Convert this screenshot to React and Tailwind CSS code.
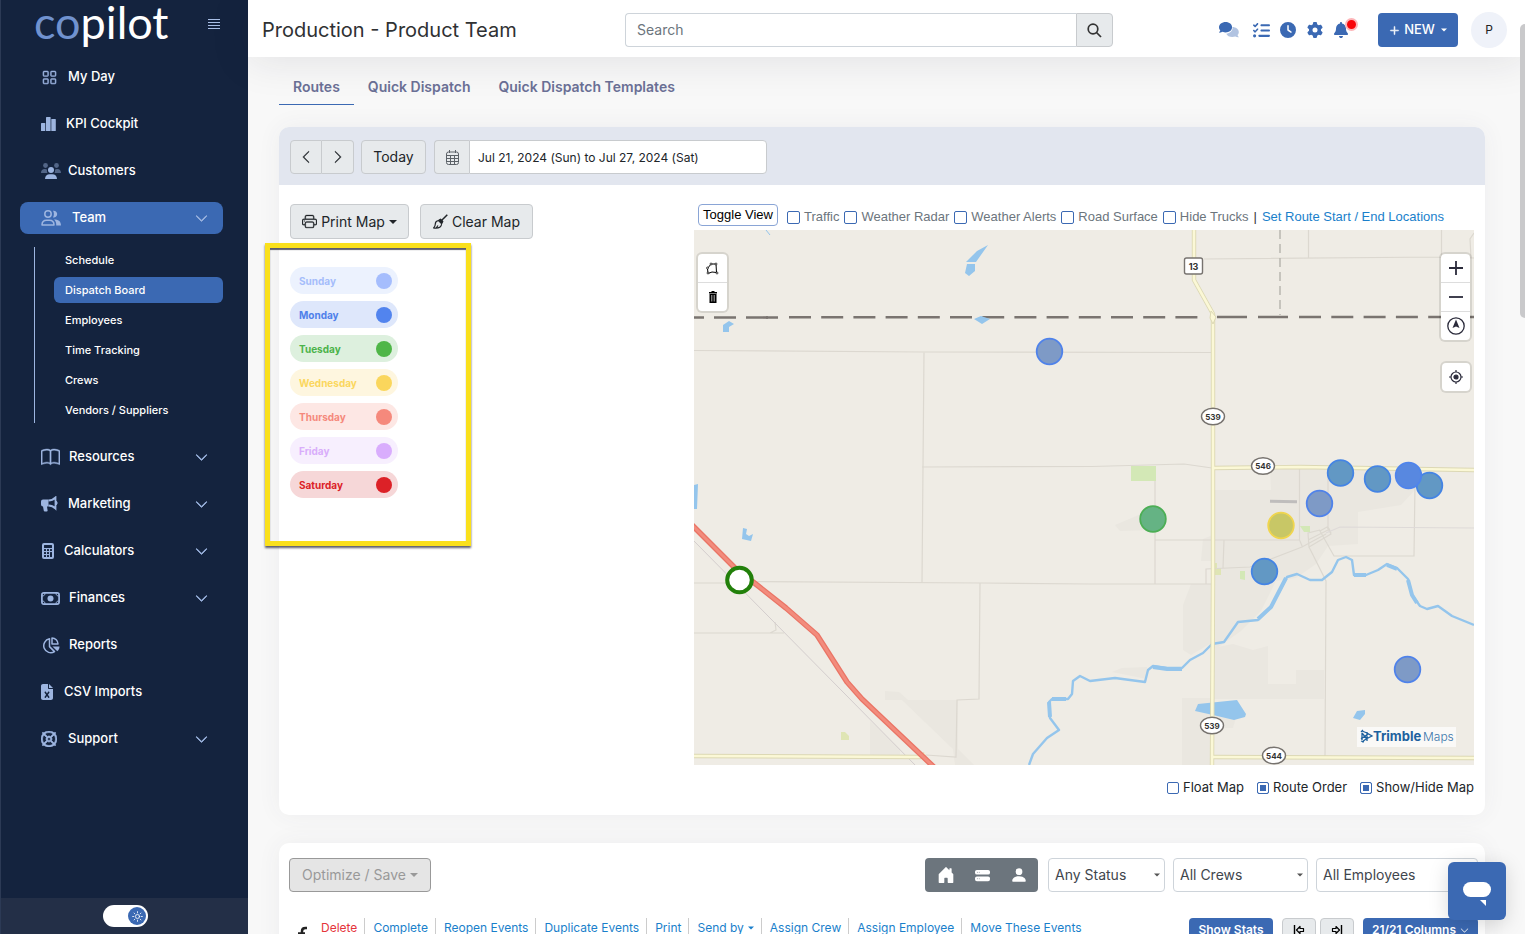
import React, { useState } from 'react';
import {
  BsGrid, BsBook, BsCalculatorFill, BsChevronDown, BsChevronLeft, BsChevronRight,
  BsPrinter, BsHouseDoorFill, BsHddStackFill, BsPersonFill, BsPlusLg,
} from 'react-icons/bs';
import { FaListCheck, FaClock, FaGear, FaBell, FaFileExcel, FaRegLifeRing } from 'react-icons/fa6';
import { HiOutlineSun } from 'react-icons/hi2';

const KpiIcon = () => (
  <svg width="15" height="14" viewBox="0 0 15 14" fill="currentColor">
    <rect x="0" y="6" width="4.300" height="8" rx="0.6" />
    <rect x="5" y="0" width="4.600" height="14" rx="0.6" />
    <rect x="10.300" y="2" width="4.500" height="12" rx="0.6" />
  </svg>
);

const CustomersIcon = () => (
  <svg width="20" height="16" viewBox="0 0 20 16" fill="currentColor">
    <g opacity="0.45">
      <circle cx="4.5" cy="2.5" r="2.4" />
      <circle cx="15.5" cy="2.5" r="2.4" />
      <path d="M0 10c0-2.6 1.400-4 3.800-4 1 0 1.700.2 2.300.7C5.700 8 5.900 9 6.600 10z" />
      <path d="M20 10c0-2.600-1.400-4-3.800-4-1 0-1.700.2-2.300.7.4 1.300.2 2.300-.5 3.300z" />
    </g>
    <circle cx="10" cy="7" r="3" />
    <path d="M4 16c0-3.200 2-4.800 4.600-4.800h2.800C14 11.200 16 12.800 16 16z" />
  </svg>
);

const TeamIcon = () => (
  <svg width="20" height="16" viewBox="0 0 20 16" fill="none" stroke="currentColor" strokeWidth="1.500">
    <circle cx="7" cy="4" r="3.200" />
    <path d="M1 15c0-3 2-4.800 4.600-4.800h2.800C11 10.200 13 12 13 15z" strokeLinejoin="round" />
    <path d="M12 .8a3.400 3.400 0 1 1 0 6.600c1.200-2 1.200-4.600 0-6.600zM13 9.500c4 0 7 1.500 7 6h-4.800c.2-2.600-.5-4.600-2.200-6z" fill="currentColor" stroke="none" />
  </svg>
);

const BullhornIcon = () => (
  <svg width="17" height="16" viewBox="0 0 17 16" fill="currentColor">
    <path d="M2 3.600h5.500v6.800H6l.6 4.200c.1.600-.3 1-.9 1H3.800c-.5 0-.9-.3-1-.8L2 10.400a2 2 0 0 1-2-2V5.600a2 2 0 0 1 2-2z" />
    <path d="M7.500 4.500c2.800 0 5-1 7-3v11c-2-2-4.200-3-7-3" fill="none" stroke="currentColor" strokeWidth="1.800" />
    <path d="M15.300 5.200c1 .5 1 3.100 0 3.600z" stroke="currentColor" />
  </svg>
);

const MoneyIcon = () => (
  <svg width="19" height="13" viewBox="0 0 19 13" fill="none" stroke="currentColor" strokeWidth="1.700">
    <rect x="0.900" y="0.900" width="17.200" height="11.200" rx="2" />
    <circle cx="9.500" cy="6.500" r="3" fill="currentColor" stroke="none" />
    <path d="M1 4c2 0 3-1 3-3M18 4c-2 0-3-1-3-3M1 9c2 0 3 1 3 3M18 9c-2 0-3 1-3 3" strokeWidth="1" />
  </svg>
);

const ReportsIcon = () => (
  <svg width="18" height="17" viewBox="0 0 18 17" fill="none" stroke="currentColor" strokeWidth="1.500">
    <path d="M7.500 1.800A7 7 0 1 0 12.500 14.600L7.500 9.600z" strokeLinejoin="round" />
    <path d="M10 1v6h6a6 6 0 0 0-6-6z" strokeLinejoin="round" />
    <path d="M10.500 9.400h7c0 2-.8 3.600-2.200 4.800z" fill="currentColor" stroke="none" />
  </svg>
);

const CommentsIcon = () => (
  <svg width="20" height="16" viewBox="0 0 20 16" fill="currentColor">
    <path opacity="0.4" d="M13.200 5c3.800 0 6.600 2.200 6.600 5 0 1.200-.5 2.300-1.300 3.100.3 1 .9 1.700 1.400 2.200-1.300.2-2.600-.2-3.600-.8-.9.300-1.900.5-2.900.5-3 0-5.300-1.300-6.100-3.300 3.500-.400 6.200-2.800 6.400-6z" />
    <path d="M6.600 0C2.900 0 0 2.300 0 5.200c0 1.200.5 2.300 1.300 3.100C1 9.400.5 10 0 10.600c1.300.2 2.600-.2 3.700-.8.9.4 1.900.6 2.900.6 3.700 0 6.500-2.300 6.500-5.200S10.300 0 6.600 0z" />
  </svg>
);

const BrushIcon = () => (
  <svg width="15" height="15" viewBox="0 0 15 15" fill="none" stroke="currentColor" strokeWidth="1.200" strokeLinejoin="round">
    <path d="M14.300.8L8.500 6.500" strokeWidth="1.500" />
    <path d="M5 6.200l4 4M5.500 6.500c-2 .3-3.200 1.500-3.200 3.500 0 1.800-.6 3-1.700 4 3 .4 7.200.2 8-3.600M3.500 13.500l1.500-2" />
    <path d="M6.200 6l1.300-.8 2.300 2.300L9 9z" fill="currentColor" />
  </svg>
);

const CalendarIcon = () => (
  <svg width="13" height="15" viewBox="0 0 13 15" fill="none" stroke="currentColor">
    <rect x="0.500" y="2" width="12" height="12.500" rx="2" />
    <path d="M.5 5.500h12M.5 8.500h12M.5 11.500h12M4.500 5.500v9M8.500 5.500v9M3.500 0v3M9.500 0v3" />
  </svg>
);

const ArrowLineIcon = ({ flip }) => (
  <svg width="12" height="10" viewBox="0 0 12 10" fill="none" stroke="currentColor" className={flip ? 'rotate-180' : ''}>
    <path d="M1.500 0v10" strokeWidth="1.400" />
    <path d="M3.500 5L7 1.500v2h3.500v3H7v2z" strokeWidth="1.200" strokeLinejoin="round" />
  </svg>
);

const Caret = ({ className = '' }) => (
  <svg width="8" height="4" viewBox="0 0 8 4" fill="currentColor" className={className}>
    <path d="M0 0h8L4 4z" />
  </svg>
);

const teamLinks = ['Schedule', 'Dispatch Board', 'Employees', 'Time Tracking', 'Crews', 'Vendors / Suppliers'];

const navItems = [
  { name: 'My Day', icon: <BsGrid size={15} strokeWidth={0.500} />, gap: 'gap-[11px] pl-[22px]' },
  { name: 'KPI Cockpit', icon: <KpiIcon />, gap: 'gap-[10px] pl-[21px]' },
  { name: 'Customers', icon: <CustomersIcon />, gap: 'gap-[7px] pl-[21px]' },
  { name: 'Team', icon: <TeamIcon />, gap: 'gap-[11px] pl-[21px]', open: true, more: true },
  { name: 'Resources', icon: <BsBook size={19} strokeWidth={0.400} />, gap: 'gap-[9px] pl-[21px]', more: true },
  { name: 'Marketing', icon: <BullhornIcon />, gap: 'gap-[10px] pl-[21px]', more: true },
  { name: 'Calculators', icon: <BsCalculatorFill size={16} />, gap: 'gap-2 pl-5', more: true },
  { name: 'Finances', icon: <MoneyIcon />, gap: 'gap-[9px] pl-[21px]', more: true },
  { name: 'Reports', icon: <ReportsIcon />, gap: 'gap-[9px] pl-[22px]' },
  { name: 'CSV Imports', icon: <FaFileExcel size={16} />, gap: 'gap-[9px] pl-[19px]' },
  { name: 'Support', icon: <FaRegLifeRing size={16} strokeWidth={20} />, gap: 'gap-[11px] pl-[21px]', more: true },
];

const days = [
  { name: 'Sunday', pill: 'bg-[#ecf2fe] text-[#a5bdfb]', dot: 'bg-[#a5bdfd]' },
  { name: 'Monday', pill: 'bg-[#dee7fb] text-[#4f80ea]', dot: 'bg-[#5284ee]' },
  { name: 'Tuesday', pill: 'bg-[#ddf0de] text-[#4bb34a]', dot: 'bg-[#4fb648]' },
  { name: 'Wednesday', pill: 'bg-[#fef6df] text-[#fbd75e]', dot: 'bg-[#fad65c]' },
  { name: 'Thursday', pill: 'bg-[#fde7e4] text-[#f5897c]', dot: 'bg-[#f5897c]' },
  { name: 'Friday', pill: 'bg-[#f7effe] text-[#d9adfb]', dot: 'bg-[#d9adfd]' },
  { name: 'Saturday', pill: 'bg-[#f6d7d8] text-[#dc2127]', dot: 'bg-[#dc2127]' },
];

const stops = [
  { x: 1049.5, y: 351.500, fill: '#7e9ac6', stroke: '#4f82ea' },
  { x: 1429.5, y: 485.500, fill: '#6298c4', stroke: '#4484e4' },
  { x: 1340.5, y: 473, fill: '#6298c4', stroke: '#4484e4' },
  { x: 1377.5, y: 479, fill: '#6298c4', stroke: '#4484e4' },
  { x: 1408.5, y: 475.500, fill: '#5888e0', stroke: '#4f84ec' },
  { x: 1319.5, y: 503.500, fill: '#7e9ac6', stroke: '#4f82ea' },
  { x: 1281, y: 525.500, fill: '#c8c766', stroke: '#f0d54e' },
  { x: 1153, y: 519, fill: '#65b384', stroke: '#4cae55' },
  { x: 1264.5, y: 571.500, fill: '#6298c4', stroke: '#4484e4' },
  { x: 1407.5, y: 669.500, fill: '#7e9ac6', stroke: '#4f82ea' },
];

const shields = [
  { x: 1213, y: 416.500, label: '539' },
  { x: 1263, y: 466, label: '546' },
  { x: 1212, y: 725.500, label: '539' },
  { x: 1274, y: 755.500, label: '544' },
];

const yellowRoads = [
  'M694 756l226 1 5-3',
  'M1213 468l87-1 174 3',
  'M1212 757l262 1',
  'M1194 230v50l19 34v266l-1 185',
];

const highway = 'M690 523l45 45 22 17 29 23 31 27 30 47 15 17 74 70';

const MapCanvas = () => (
  <svg viewBox="694 230 780 535" preserveAspectRatio="xMidYMid slice" className="block h-full w-full">
    <rect x="694" y="230" width="780" height="535" fill="#efece5" />
    <g fill="#eae7e0">
      <path d="M870 721l30 28v6h-30zM885 691l14 1 9 8h50v49l16 16h-19l-2-16-51-49h-17z" />
      <path d="M1270 468h145v22l-14 15-43 7v32l-30 2-12 18-20 14-20 3-15 30-20 20-28 20v-90h-12l2-22 10-4v-45h58z" />
      <path d="M1213 584v58l-22 13-8-5v-45l8-21zM1213 648l20-4 20 6 15-4v38h28v-14h28v29h-112zM1182 698h31v16h24l-4 14h-20v37h-31z" />
      <path d="M1115 525l40-17v22l-35 1zM1112 672l10-4 25-1v12z" />
    </g>
    <g fill="#d3e8b6">
      <path d="M1131 466h25v15h-25zM1240 571h5v9l-5-1zM1300 526h10v6h-6z" />
      <path d="M1214 563h3v5h4v7h-7zM841 732h4l4 4v4h-8z" fill="#dfe5b4" />
    </g>
    <g fill="none" stroke="#dcd8d0" strokeWidth="1.200">
      <path d="M694 350.500l229 1.500 289 .5M924 352l-2 231M922 467l170-.5 92-2.500 28 4" />
      <path d="M694 583h40M752 581.500l230 1.500 108 1h122M980 583l-1 116-22 1-1 57-30-2" />
      <path d="M694 633h90M775 622l1 8-6 3M1155 481v103M1155 540h144M1224 540l-1 28M1206 584v-15l44-2 52-20 24-13" />
      <path d="M1204 259l237-2 33 1M1308.500 230v28M1441.500 230v27M1474 233l-4 6 1 19" />
      <path d="M1299.500 468v72l3 7M1328 470v57l3 6M1415 484l-1 72h-80l-14-25 7-4 4 7-22 13-1-14 12-3M1309 547l17 34-1 176M1308 540l22-11" />
      <path d="M1326 533l14-6 134 1" stroke="#dedad8" />
    </g>
    <path d="M694 541l224 227" stroke="#d3cdcd" fill="none" />
    <path d="M1280 230v85" stroke="#b9b6b0" strokeWidth="1.500" strokeDasharray="9 5" fill="none" />
    <rect x="1270" y="500" width="27" height="3" fill="#bfbdbc" transform="rotate(1 1283 501)" />
    <g stroke="#7a7470" strokeWidth="2.600" fill="none">
      <path d="M682 317.500h96" strokeDasharray="22 10" />
      <path d="M766 317.500h12M1217 317h30M1258 317h30" />
      <path d="M789 317.300h410" strokeDasharray="22 10.200" />
      <path d="M1299 317h175" strokeDasharray="22 10.300" />
    </g>
    <g fill="#94c5ec">
      <path d="M966 262l11-11 11-6-12 17zM967 264h8v7l-6 5-4-3zM723 325l6-4 5 3-5 3v5h-6zM974 319l7-3 9 3-8 5zM694 485l4-1-1 25h-3z" />
      <path d="M743 528l4 1-1 5 3 2 4-2-2 7-9-2zM1195 711l3-7 39-4 9 14-1 3-11 3-21-5zM1353 718l4-7 8-1v4l-5 6z" />
    </g>
    <g fill="none" stroke="#94c5ec" strokeLinejoin="round">
      <path d="M766 230l4 5" />
      <path
        strokeWidth="2.400"
        d="M1029 765l4-11 14-16 12-8-9-12-1-16 3-3h16l4-5 1-13 7-5 10 5 25-3 30 4 3-12 5-4 14 2h15l8-8 13-7 9-9 12-2 14-20 20-2 13-13 16-30 10-3 13 6h12l10-8 6-12 8-3 6 3 2 15h12l12-5 9-6 10 4 11 11 4 16 8 11 7 3 11-3 14 10 22 9"
      />
      <path strokeWidth="4" d="M1153 667l14 2h15M1258 619l13-12 15-29M1408 580l4 15 5 8M1052 699h14M1387 565l10 4M1354 575h12M1049 702l1 15" />
    </g>
    <g fill="none" strokeLinejoin="round">
      {yellowRoads.map((d) => (
        <path key={d} d={d} stroke="#dcd8b4" strokeWidth="4.400" />
      ))}
      {yellowRoads.map((d) => (
        <path key={d} d={d} stroke="#fbf8d6" strokeWidth="2.600" />
      ))}
      <path d="M1211 311l5 6-3 7-3-6z" fill="#fbf8d6" stroke="#dcd8b4" />
      <path d={highway} stroke="#ea7465" strokeWidth="5.500" />
      <path d={highway} stroke="#f28c7d" strokeWidth="3" />
    </g>
    <rect x="1184.500" y="258" width="18" height="16" rx="2" fill="#fff" stroke="#77736f" strokeWidth="1.400" />
    <text x="1193.500" y="269.500" textAnchor="middle" className="fill-[#333] text-[9px] font-bold">13</text>
    {shields.map((s) => (
      <g key={`${s.x}-${s.y}`}>
        <ellipse cx={s.x} cy={s.y} rx="11.500" ry="8.300" fill="#fff" stroke="#77736f" strokeWidth="1.400" />
        <text x={s.x} y={s.y + 3} textAnchor="middle" className="fill-[#333] text-[8px] font-bold">{s.label}</text>
      </g>
    ))}
    <circle cx="739.500" cy="580" r="12.300" fill="#fff" stroke="#22800a" strokeWidth="4" />
    {stops.map((s) => (
      <circle key={`${s.x}-${s.y}`} cx={s.x} cy={s.y} r="12.800" fill={s.fill} stroke={s.stroke} strokeWidth="1.800" />
    ))}
    <rect x="1357" y="727" width="99" height="20" fill="#fff" fillOpacity="0.7" />
    <g fill="none" stroke="#1d619e" strokeWidth="1.300">
      <path d="M1362 731l5 2 5 3-6 3-4 3M1362 733v7M1367 732v9M1362 733l5 6M1361 739l7-5M1363 730l-2 2M1361 741l3 1" />
    </g>
    <text x="1373" y="741" className="fill-[#1d619e] text-[13px] font-bold">Trimble</text>
    <text x="1423" y="741" className="fill-[#3b76ab] text-[12px] font-light">Maps</text>
  </svg>
);

const Check = ({ label, checked = false, font, size }) => (
  <label className={`flex items-center gap-1 whitespace-nowrap ${font}`}>
    <input
      type="checkbox"
      defaultChecked={checked}
      className={`appearance-none rounded-[2px] border border-[#3b69b3] bg-white checked:bg-[#3b69b3] checked:shadow-[inset_0_0_0_2px_white] ${size}`}
    />
    {label}
  </label>
);

const Sidebar = () => (
  <aside className="flex w-[248px] shrink-0 flex-col border-l border-[#2c3a55] bg-[#14233e] text-white">
    <div className="flex h-[61px] items-start justify-between pl-[33px] pr-7">
      <a href="#home" className="font-['Lato',sans-serif] text-[45px] leading-[44px]">
        <span className="text-[#7092cf]">co</span>pilot
      </a>
      <button aria-label="Collapse menu" className="mt-[19px] text-[#a9bfe6]">
        <svg width="12" height="11" viewBox="0 0 12 11" stroke="currentColor">
          <path d="M0 .5h12M0 3.500h12M0 6.500h12M0 9.500h12" />
        </svg>
      </button>
    </div>
    <nav className="flex flex-1 flex-col gap-[15px] pl-[19px] pr-[25px]">
      {navItems.map((item) => (
        <div key={item.name}>
          <a
            href="#nav"
            className={`flex h-8 items-center rounded-lg pr-[15px] text-[13px] font-medium ${item.gap} ${item.open ? 'bg-[#3b69b3]' : ''}`}
          >
            <span className="text-[#9db5e0]">{item.icon}</span>
            {item.name}
            {item.more && <BsChevronDown size={13} strokeWidth={1} className="ml-auto text-[#9db5e0]" />}
          </a>
          {item.open && (
            <div className="mb-[3px] ml-[14px] mt-[13px] border-l border-[#9db5e0] pl-[19px]">
              <div className="flex flex-col gap-1">
                {teamLinks.map((link) => (
                  <a
                    key={link}
                    href="#team"
                    className={`flex h-[26px] items-center rounded-md pl-[11px] text-[11px] font-medium ${
                      link === 'Dispatch Board' ? 'bg-[#3b69b3]' : ''
                    }`}
                  >
                    {link}
                  </a>
                ))}
              </div>
            </div>
          )}
        </div>
      ))}
    </nav>
    <div className="flex h-9 items-center justify-center bg-[#232f47] pl-[2px]">
      <label className="relative block h-[22px] w-[45px] rounded-full bg-white">
        <input type="checkbox" defaultChecked aria-label="Light theme" className="absolute inset-0 appearance-none" />
        <span className="absolute right-[2px] top-[2px] flex size-[18px] items-center justify-center rounded-full bg-[#3b69b3]">
          <HiOutlineSun size={13} />
        </span>
      </label>
    </div>
  </aside>
);

const TopBar = () => (
  <header className="relative z-10 flex h-[57px] shrink-0 items-center bg-white pb-px pl-[14px] pr-[18px] pt-1 shadow-[0_4px_40px_rgba(30,30,50,0.1)]">
    <h1 className="w-[363px] text-xl text-[#2f3133]">Production - Product Team</h1>
    <form className="flex h-[34px] w-[488px]">
      <input
        type="text"
        aria-label="Search"
        placeholder="Search"
        className="min-w-0 flex-1 rounded-l border border-r-0 border-[#ced4da] px-[11px] text-sm placeholder:text-[#6c757d]"
      />
      <button type="button" aria-label="Search" className="flex w-[37px] items-center justify-center rounded-r border border-[#c8cbce] bg-[#e7eaec] pr-px text-[#333]">
        <svg width="15" height="15" viewBox="0 0 15 15" fill="none" stroke="currentColor" strokeWidth="1.700">
          <circle cx="6" cy="6" r="4.800" />
          <path d="M9.500 9.500l4.500 4.500" />
        </svg>
      </button>
    </form>
    <div className="ml-auto flex items-center text-[#3b69b3]">
      <button aria-label="Messages" className="mr-[14px]"><CommentsIcon /></button>
      <button aria-label="Tasks" className="mr-[10px]"><FaListCheck size={17} /></button>
      <button aria-label="Timers" className="mr-[11px]"><FaClock size={16} /></button>
      <button aria-label="Settings" className="mr-[10px]"><FaGear size={16} /></button>
      <button aria-label="Notifications" className="relative mr-[29px]">
        <FaBell size={16} />
        <span className="absolute -right-[9px] -top-[4px] size-[13px] rounded-full border-2 border-[#fdb5b8] bg-[#f80509]" />
      </button>
      <button className="flex h-[34px] w-20 items-center justify-center gap-1 rounded bg-[#3b69b3] text-[13px] font-medium text-white">
        <BsPlusLg size={11} strokeWidth={1} />
        NEW
        <Caret className="ml-[2px] w-[6px]" />
      </button>
      <button className="ml-[13px] size-9 rounded-full bg-[#eff2f9] text-xs text-[#222]">P</button>
    </div>
  </header>
);

const RoutesCard = () => {
  const grayBtn = 'flex items-center justify-center border border-[#c8cbce] bg-[#e7eaec] text-[#212529]';
  return (
    <section className="rounded-[10px] bg-white shadow-[0_0_24px_rgba(60,60,90,0.06)]">
      <div className="flex h-[58px] items-center rounded-t-[10px] bg-[#e2e6ef] pl-[11px] pt-[2px]">
        <button aria-label="Previous week" className={`h-[34px] w-8 rounded-l pr-px ${grayBtn}`}><BsChevronLeft size={14} strokeWidth={0.500} /></button>
        <button aria-label="Next week" className={`h-[34px] w-8 rounded-r border-l-0 pl-px ${grayBtn}`}><BsChevronRight size={14} strokeWidth={0.500} /></button>
        <button className={`ml-[7px] h-[34px] w-[65px] rounded text-sm ${grayBtn}`}>Today</button>
        <span className="ml-2 flex h-[34px] w-[35px] items-center justify-center rounded-l border border-r-0 border-[#c8cbce] bg-[#e7eaec] text-[#5c6268]">
          <CalendarIcon />
        </span>
        <input
          type="text"
          aria-label="Date range"
          defaultValue="Jul 21, 2024 (Sun) to Jul 27, 2024 (Sat)"
          className="h-[34px] w-[298px] rounded-r border border-[#c8cbce] bg-white px-2 text-xs text-[#212529]"
        />
      </div>

      <div className="flex px-[11px] pt-[19px]">
        <div className="w-[404px] shrink-0">
          <div className="flex gap-[11px]">
            <button className={`h-[35px] w-[119px] gap-1 rounded text-sm ${grayBtn}`}>
              <BsPrinter size={15} strokeWidth={0.300} />
              Print Map
              <Caret />
            </button>
            <button className={`h-[35px] w-[113px] gap-1 rounded text-sm ${grayBtn}`}>
              <BrushIcon />
              Clear Map
            </button>
          </div>
          <div className="relative mt-7 flex w-[108px] flex-col gap-[7px]">
            {days.map((day) => (
              <button
                key={day.name}
                className={`flex h-[27px] items-center justify-between rounded-full pl-[9px] pr-[6px] pt-px text-[10px] font-bold ${day.pill}`}
              >
                {day.name}
                <span className={`size-4 rounded-full ${day.dot}`} />
              </button>
            ))}
            <div className="pointer-events-none absolute -left-[25px] -top-6 h-[303px] w-[206px] border-5 border-[#fae01c] shadow-[0_2px_2px_rgba(40,40,60,0.75),inset_0_2px_1px_rgba(40,40,60,0.75)]" />
          </div>
        </div>

        <div className="min-w-0 flex-1">
          <div className="flex h-[26px] items-start gap-[7px] pl-1 font-['Liberation_Sans',Arial,sans-serif] text-[13px] text-[#6c757d]">
            <button className="mr-[2px] h-[22px] w-20 whitespace-nowrap rounded border border-[#8aa5d6] bg-white text-black">Toggle View</button>
            <div className="flex h-[26px] items-center gap-[5px]">
              {['Traffic', 'Weather Radar', 'Weather Alerts', 'Road Surface', 'Hide Trucks'].map((label) => (
                <Check key={label} label={label} size="size-[13px]" />
              ))}
              <span className="text-[#333]">|</span>
              <a href="#locations" className="whitespace-nowrap text-[#1a7fcb]">Set Route Start / End Locations</a>
            </div>
          </div>
          <div className="relative h-[535px] overflow-hidden">
            <MapCanvas />
            <div className="absolute left-1 top-6 flex w-[29px] flex-col divide-y divide-[#ddd] rounded bg-white shadow-[0_0_0_2px_rgba(0,0,0,0.1)]">
              <button aria-label="Draw polygon" className="flex h-[29px] items-center justify-center">
                <svg width="13" height="13" viewBox="0 0 13 13" fill="none" stroke="#000">
                  <path d="M5 2h5l.5 8.500L6 10l-4 1.500-.5-5z" />
                  <g fill="#fff" strokeWidth="0.700">
                    <circle cx="5" cy="2" r="1" /><circle cx="10" cy="2" r="1" /><circle cx="11" cy="11" r="1" /><circle cx="2" cy="11" r="1" /><circle cx="1.500" cy="6" r="1" />
                  </g>
                </svg>
              </button>
              <button aria-label="Delete shape" className="flex h-7 items-center justify-center">
                <svg width="8" height="12" viewBox="0 0 8 12">
                  <path d="M2.500 0h3v1H8v1.500H0V1h2.500zM.5 3h7v9h-7z" />
                  <path d="M2.800 4v6.500M5.200 4v6.500" stroke="#fff" strokeWidth="0.700" />
                </svg>
              </button>
            </div>
            <div className="absolute right-1 top-6 flex w-[29px] flex-col divide-y divide-[#ddd] rounded bg-white text-[#2b2b3b] shadow-[0_0_0_2px_rgba(0,0,0,0.1)]">
              <button aria-label="Zoom in" className="flex h-[29px] items-center justify-center">
                <svg width="14" height="14" stroke="currentColor" strokeWidth="1.800"><path d="M7 0v14M0 7h14" /></svg>
              </button>
              <button aria-label="Zoom out" className="flex h-[29px] items-center justify-center">
                <svg width="14" height="14" stroke="currentColor" strokeWidth="1.800"><path d="M0 7h14" /></svg>
              </button>
              <button aria-label="Reset north" className="flex h-7 items-center justify-center">
                <svg width="18" height="18" viewBox="0 0 18 18" fill="none" stroke="currentColor" strokeWidth="1.300">
                  <circle cx="9" cy="9" r="8.200" />
                  <path d="M9 2.500l3.500 8.500-3.500-1.500L5.500 11z" fill="currentColor" stroke="none" />
                </svg>
              </button>
            </div>
            <button aria-label="Find my location" className="absolute right-1 top-[133px] flex size-7 items-center justify-center rounded bg-white text-[#2b2b3b] shadow-[0_0_0_2px_rgba(0,0,0,0.1)]">
              <svg width="14" height="14" viewBox="0 0 14 14" fill="none" stroke="currentColor" strokeWidth="1.200">
                <circle cx="7" cy="7" r="5" />
                <circle cx="7" cy="7" r="2" fill="currentColor" />
                <path d="M7 0v2M7 12v2M0 7h2M12 7h2" />
              </svg>
            </button>
          </div>
          <div className="flex h-[50px] items-start justify-end gap-[13px] pt-[13px] text-[#212529]">
            <Check label="Float Map" font="text-[13px]" size="size-3" />
            <Check label="Route Order" checked font="text-[13px]" size="size-3" />
            <Check label="Show/Hide Map" checked font="text-[13px]" size="size-3" />
          </div>
        </div>
      </div>
    </section>
  );
};

const filters = [
  { label: 'Any Status', width: 'w-[117px]' },
  { label: 'All Crews', width: 'w-[135px]' },
  { label: 'All Employees', width: 'w-[162px]' },
];

const actions = ['Delete', 'Complete', 'Reopen Events', 'Duplicate Events', 'Print', 'Send by', 'Assign Crew', 'Assign Employee', 'Move These Events'];

const EventsCard = () => (
  <section className="mt-7 rounded-t-[10px] bg-white pl-[10px] pr-[7px] pt-[15px] shadow-[0_0_24px_rgba(60,60,90,0.06)]">
    <div className="flex items-center">
      <button disabled className="flex h-[34px] w-[142px] items-center justify-center gap-1 rounded border border-[#999] bg-[#e5e5e5] text-sm text-[#999]">
        Optimize / Save
        <Caret />
      </button>
      <div className="ml-auto flex h-[34px] w-[113px] items-center justify-around rounded bg-[#6c757d] pl-[2px] text-white">
        <button aria-label="Properties"><BsHouseDoorFill size={18} /></button>
        <button aria-label="List"><BsHddStackFill size={15} /></button>
        <button aria-label="People"><BsPersonFill size={18} /></button>
      </div>
      <div className="ml-[10px] flex gap-2">
        {filters.map((f) => (
          <div key={f.label} className={`relative ${f.width}`}>
            <select aria-label={f.label} className="h-[34px] w-full appearance-none rounded border border-[#ced4da] bg-white pl-[6px] text-sm text-[#3f464d]">
              <option>{f.label}</option>
            </select>
            <Caret className="absolute right-[5px] top-[15px] w-[6px] text-[#555]" />
          </div>
        ))}
      </div>
    </div>
    <div className="mt-[26px] flex h-10 items-start">
      <svg width="12" height="20" viewBox="0 0 12 20" fill="none" stroke="#222" strokeWidth="2.500" className="ml-[7px] mt-2">
        <path d="M11 2H9.500Q6 2 6 5v9M2 7.500h7" />
      </svg>
      <div className="ml-[13px] flex text-xs text-[#1a7fcb]">
        {actions.map((name, i) => (
          <a
            key={name}
            href="#action"
            className={`flex h-5 items-center gap-1 whitespace-nowrap ${i ? 'border-l border-[#ccc] pl-2' : 'text-[#e5343b]'} pr-[7px]`}
          >
            {name}
            {name === 'Send by' && <Caret className="w-[6px]" />}
          </a>
        ))}
      </div>
      <div className="ml-auto flex text-xs">
        <button className="h-6 w-[84px] rounded bg-[#3b69b3] font-semibold text-white">Show Stats</button>
        <button aria-label="First columns" className="ml-[9px] flex h-6 w-[34px] items-center justify-center rounded border border-[#c8cbce] bg-[#e7eaec]"><ArrowLineIcon /></button>
        <button aria-label="Last columns" className="ml-1 flex h-6 w-[34px] items-center justify-center rounded border border-[#c8cbce] bg-[#e7eaec]"><ArrowLineIcon flip /></button>
        <button className="ml-[9px] flex h-6 w-[115px] items-center justify-center gap-1 rounded bg-[#3b69b3] font-semibold text-white">
          21/21 Columns
          <BsChevronDown size={9} />
        </button>
      </div>
    </div>
  </section>
);

const App = () => {
  const [activeTab, setActiveTab] = useState('Routes');

  return (
    <div className="flex h-screen overflow-hidden bg-[#f8f8f8] font-['Inter',sans-serif]">
      <Sidebar />
      <div className="relative flex min-w-0 flex-1 flex-col">
        <TopBar />
        <main className="min-h-0 flex-1 overflow-hidden pl-[31px] pr-10">
          <div className="mb-[22px] flex h-12">
            {['Routes', 'Quick Dispatch', 'Quick Dispatch Templates'].map((tab) => (
              <button
                key={tab}
                onClick={() => setActiveTab(tab)}
                className={`border-b px-[14px] pt-3 text-sm font-semibold text-[#6b7096] ${
                  activeTab === tab ? 'border-[#3b69b3]' : 'border-transparent'
                }`}
              >
                {tab}
              </button>
            ))}
          </div>
          <RoutesCard />
          <EventsCard />
        </main>
        <div className="absolute right-0 top-6 z-20 h-[294px] w-[5px] rounded-l-full bg-[#c9c9cb]" />
      </div>
      <button aria-label="Open chat" className="fixed bottom-[14px] right-[19px] z-30 flex size-[58px] items-center justify-center rounded-md bg-[#3b69b3] pt-[6px] shadow-[0_4px_20px_rgba(0,0,0,0.15)]">
        <svg width="28" height="24" viewBox="0 0 28 24" fill="#fff">
          <rect x="0" y="0" width="28" height="15" rx="7.500" />
          <path d="M17 18h6v6z" />
        </svg>
      </button>
    </div>
  );
};

export default App;
